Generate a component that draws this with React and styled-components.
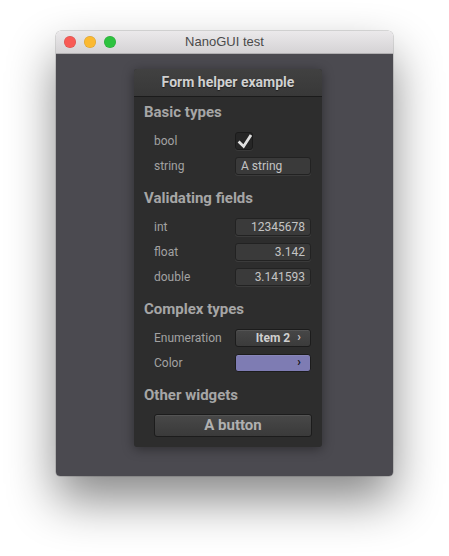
import React from "react";
import styled, { createGlobalStyle } from "styled-components";

const GlobalStyle = createGlobalStyle`
  html, body { margin: 0; padding: 0; background: #ffffff; }
  body { font-family: Roboto, "Noto Sans", sans-serif; }
  * { box-sizing: border-box; }
`;

const Page = styled.div`
  padding: 31px 0 0 56px;
  min-height: 556px;
`;

const Window = styled.div`
  width: 337px;
  height: 445px;
  display: flex;
  flex-direction: column;
  border-radius: 5px 5px 4px 4px;
  overflow: hidden;
  box-shadow: 0 24px 48px rgba(0, 0, 0, 0.47), 0 0 0 0.5px rgba(0, 0, 0, 0.25);
`;

const TitleBar = styled.div`
  height: 23px;
  flex: none;
  display: grid;
  grid-template-columns: 1fr auto 1fr;
  align-items: center;
  background: linear-gradient(#ebe9eb, #d5d3d5);
  border-bottom: 1px solid #b1afb1;
`;

const Lights = styled.div`
  display: flex;
  gap: 8px;
  padding-left: 8px;
`;

const Light = styled.span`
  width: 12px;
  height: 12px;
  border-radius: 50%;
  background: ${(p) => p.$color};
  box-shadow: inset 0 0 0 0.5px rgba(0, 0, 0, 0.15);
`;

const Title = styled.div`
  font-family: "Liberation Sans", Arial, sans-serif;
  font-size: 13px;
  color: #4a4a4a;
  line-height: 22px;
`;

const Content = styled.div`
  flex: 1;
  background: #4b4a50;
  padding: 15px 0 0 78px;
`;

const Panel = styled.div`
  width: 188px;
  background: #2d2d2d;
  border-radius: 3px;
  box-shadow: 0 2px 12px rgba(0, 0, 0, 0.4);
  padding-bottom: 10px;
  display: flex;
  flex-direction: column;
`;

const PanelHeader = styled.div`
  height: 28px;
  line-height: 27px;
  text-align: center;
  font-weight: 700;
  font-size: 14px;
  color: #d0d0d0;
  background: linear-gradient(#414141, #383838);
  border-bottom: 1px solid #1b1b1b;
  border-radius: 3px 3px 0 0;
  text-shadow: 0 1px 1px rgba(0, 0, 0, 0.5);
`;

const SectionTitle = styled.div`
  margin-top: ${(p) => (p.$first ? 5 : 10)}px;
  margin-bottom: 5px;
  padding-left: 10px;
  height: 21px;
  line-height: 21px;
  font-weight: 700;
  font-size: 15px;
  color: #a6a6a6;
`;

const Row = styled.div`
  display: grid;
  grid-template-columns: 81px 76px;
  align-items: center;
  height: 25px;
  padding-left: 20px;
`;

const Label = styled.span`
  font-size: 12px;
  color: #a2a2a2;
`;

const CheckBox = styled.div`
  width: 18px;
  height: 18px;
  border-radius: 3px;
  background: #262626;
  border: 1px solid #1b1b1b;
  box-shadow: 0 1px 0 rgba(255, 255, 255, 0.06);
  position: relative;
  svg {
    position: absolute;
    left: 0;
    top: -1px;
  }
`;

const TextBox = styled.div`
  height: 18px;
  border-radius: 3px;
  background: #3a3a3a;
  border: 1px solid #222222;
  box-shadow: 0 1px 0 rgba(255, 255, 255, 0.07);
  font-size: 12px;
  line-height: 16px;
  color: #c4c4c4;
  padding: 0 5px;
  text-align: ${(p) => (p.$right ? "right" : "left")};
  white-space: nowrap;
`;

const PopupButton = styled.div`
  height: 18px;
  border-radius: 3px;
  border: 1px solid #1c1c1c;
  background: ${(p) => p.$fill || "linear-gradient(#474747, #3b3b3b)"};
  box-shadow: inset 0 1px 0 rgba(255, 255, 255, 0.08);
  display: flex;
  align-items: center;
  justify-content: center;
  position: relative;
  font-size: 12px;
  font-weight: 700;
  color: #cfcfcf;
  line-height: 16px;
`;

const Chevron = styled.span`
  position: absolute;
  right: 9px;
  top: 0;
  line-height: 15px;
  font-size: 12px;
  font-weight: 700;
  color: ${(p) => p.$color};
`;

const ButtonRow = styled.div`
  padding: 3px 10px 0 20px;
`;

const Button = styled.div`
  height: 23px;
  width: 158px;
  border-radius: 3px;
  border: 1px solid #1c1c1c;
  background: linear-gradient(#484848, #3a3a3a);
  box-shadow: inset 0 1px 0 rgba(255, 255, 255, 0.07);
  text-align: center;
  line-height: 21px;
  font-size: 15px;
  font-weight: 700;
  color: #b0b0b0;
`;

const Check = () => (
  <svg width="18" height="18" viewBox="0 0 18 18">
    <path d="M2.6 9.6 L7.6 14.4 L15 3" fill="none" stroke="#e0e0e0" strokeWidth="2.8" />
  </svg>
);

export default function App() {
  return (
    <Page>
      <GlobalStyle />
      <Window>
        <TitleBar>
          <Lights>
            <Light $color="#f85a55" />
            <Light $color="#fbb931" />
            <Light $color="#2dc23f" />
          </Lights>
          <Title>NanoGUI test</Title>
          <span />
        </TitleBar>
        <Content>
          <Panel>
            <PanelHeader>Form helper example</PanelHeader>
            <SectionTitle $first>Basic types</SectionTitle>
            <Row>
              <Label>bool</Label>
              <CheckBox>
                <Check />
              </CheckBox>
            </Row>
            <Row>
              <Label>string</Label>
              <TextBox>A string</TextBox>
            </Row>
            <SectionTitle>Validating fields</SectionTitle>
            <Row>
              <Label>int</Label>
              <TextBox $right>12345678</TextBox>
            </Row>
            <Row>
              <Label>float</Label>
              <TextBox $right>3.142</TextBox>
            </Row>
            <Row>
              <Label>double</Label>
              <TextBox $right>3.141593</TextBox>
            </Row>
            <SectionTitle>Complex types</SectionTitle>
            <Row>
              <Label>Enumeration</Label>
              <PopupButton>
                Item 2<Chevron $color="#c8c8c8">›</Chevron>
              </PopupButton>
            </Row>
            <Row>
              <Label>Color</Label>
              <PopupButton $fill="#7e7cb3">
                <Chevron $color="#111">›</Chevron>
              </PopupButton>
            </Row>
            <SectionTitle>Other widgets</SectionTitle>
            <ButtonRow>
              <Button>A button</Button>
            </ButtonRow>
          </Panel>
        </Content>
      </Window>
    </Page>
  );
}
